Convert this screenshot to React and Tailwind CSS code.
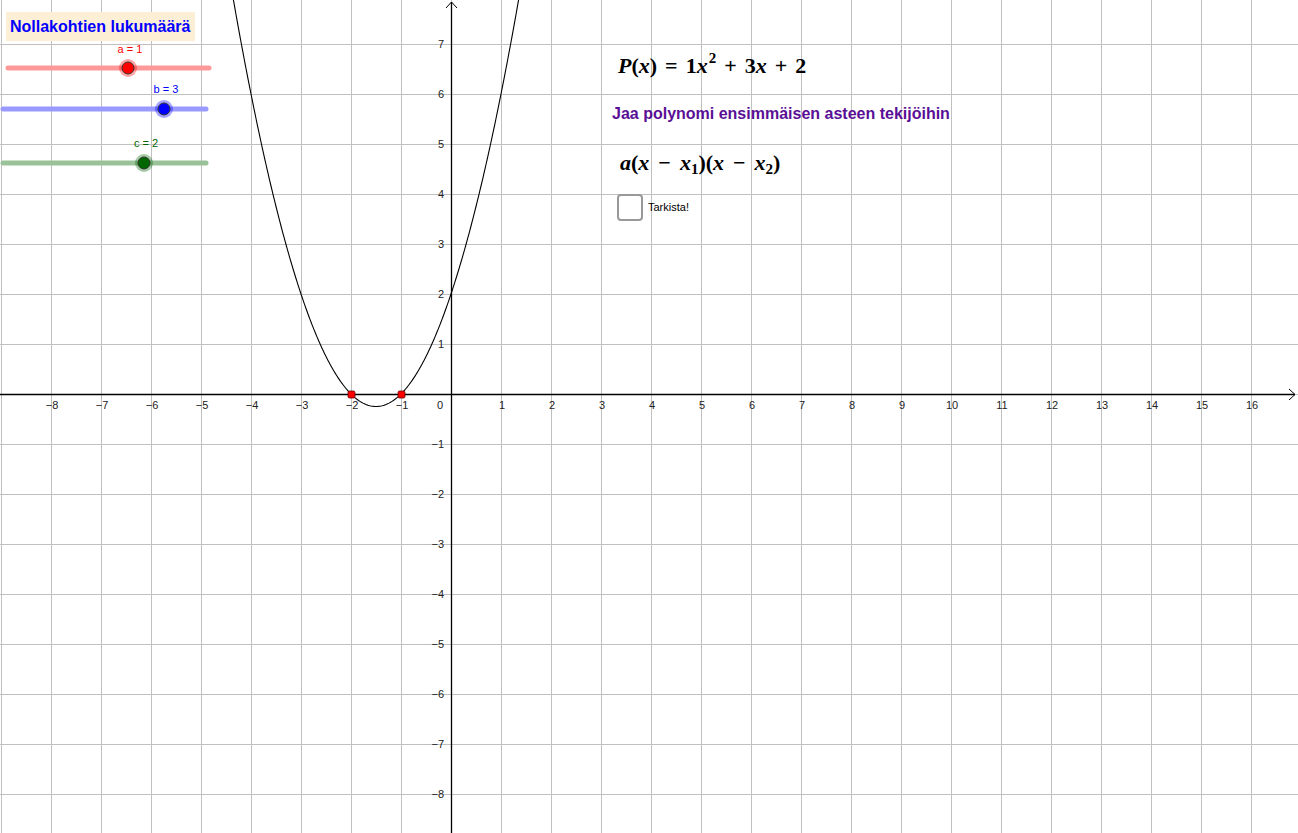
import React from "react";

const OX = 451;
const OY = 394;
const U = 50;

const px = (x) => OX + x * U;
const py = (y) => OY - y * U;

function Graph() {
  const vLines = [];
  for (let i = -9; i <= 17; i++) vLines.push(i);
  const hLines = [];
  for (let j = -9; j <= 8; j++) hLines.push(j);

  // paraabeli y = x^2 + 3x + 2
  const pts = [];
  for (let x = -4.5; x <= 1.5; x += 0.02) {
    const y = x * x + 3 * x + 2;
    pts.push(`${px(x).toFixed(2)},${py(y).toFixed(2)}`);
  }

  const minus = (n) => (n < 0 ? `\u2212${-n}` : `${n}`);

  return (
    <svg width="1298" height="833" className="absolute inset-0" style={{ fontFamily: "'Liberation Sans', Arial, sans-serif" }}>
      <rect width="1298" height="833" fill="#ffffff" />
      {vLines.map((i) => (
        <line key={`v${i}`} x1={px(i) + 0.5} y1="0" x2={px(i) + 0.5} y2="833" stroke="#c0c0c0" strokeWidth="1" />
      ))}
      {hLines.map((j) => (
        <line key={`h${j}`} x1="0" y1={py(j) + 0.5} x2="1298" y2={py(j) + 0.5} stroke="#c0c0c0" strokeWidth="1" />
      ))}

      {/* akselit */}
      <line x1="0" y1={OY + 0.5} x2="1295" y2={OY + 0.5} stroke="#000" strokeWidth="1.3" />
      <polyline points={`1289,${OY - 5} 1295,${OY + 0.5} 1289,${OY + 6}`} fill="none" stroke="#000" strokeWidth="1" />
      <line x1={OX + 0.5} y1="2" x2={OX + 0.5} y2="833" stroke="#000" strokeWidth="1.3" />
      <polyline points={`${OX - 5},8 ${OX + 0.5},2 ${OX + 6},8`} fill="none" stroke="#000" strokeWidth="1" />

      {/* x-akselin luvut */}
      {vLines
        .filter((i) => i >= -8 && i <= 16 && i !== 0)
        .map((i) => (
          <text key={`xl${i}`} x={px(i) + 1} y={OY + 15} fontSize="11" fill="#222" textAnchor="middle">
            {minus(i)}
          </text>
        ))}
      <text x={OX - 11} y={OY + 15} fontSize="11" fill="#222" textAnchor="middle">
        0
      </text>

      {/* y-akselin luvut */}
      {hLines
        .filter((j) => j >= -8 && j <= 7 && j !== 0)
        .map((j) => (
          <text key={`yl${j}`} x={OX - 7} y={py(j) + 4} fontSize="11" fill="#222" textAnchor="end">
            {minus(j)}
          </text>
        ))}

      <polyline points={pts.join(" ")} fill="none" stroke="#000" strokeWidth="1.1" />

      {/* nollakohdat */}
      {[-2, -1].map((x) => (
        <rect key={`z${x}`} x={px(x) - 3} y={OY - 3} width="7" height="7" rx="1.5" fill="#ff0000" stroke="#600" strokeWidth="0.8" />
      ))}

      {/* liukusäätimet */}
      <line x1="8" y1="68" x2="209" y2="68" stroke="#ff9999" strokeWidth="5" strokeLinecap="round" />
      <circle cx="128" cy="68" r="9" fill="#ff0000" fillOpacity="0.35" />
      <circle cx="128" cy="68" r="6" fill="#ff0000" stroke="#333" strokeWidth="1" />

      <line x1="3" y1="109" x2="206" y2="109" stroke="#9999ff" strokeWidth="5" strokeLinecap="round" />
      <circle cx="164" cy="109" r="9" fill="#0000ff" fillOpacity="0.35" />
      <circle cx="164" cy="109" r="6" fill="#0000ff" stroke="#333" strokeWidth="1" />

      <line x1="3" y1="163" x2="206" y2="163" stroke="#99c299" strokeWidth="5" strokeLinecap="round" />
      <circle cx="144" cy="163" r="9" fill="#006600" fillOpacity="0.35" />
      <circle cx="144" cy="163" r="6" fill="#006600" stroke="#333" strokeWidth="1" />

      <text x="130" y="53" fontSize="11" fill="#ff0000" textAnchor="middle">a = 1</text>
      <text x="166" y="93" fontSize="11" fill="#0000ff" textAnchor="middle">b = 3</text>
      <text x="146" y="147" fontSize="11" fill="#006600" textAnchor="middle">c = 2</text>
    </svg>
  );
}

const mathCls = "font-['Liberation_Serif',serif] font-bold text-[22px] leading-[22px] h-[22px] text-black whitespace-nowrap flex items-baseline";

function Op({ children, m = "mx-[8px]" }) {
  return <span className={m}>{children}</span>;
}

export default function App() {
  return (
    <div className="relative w-[1298px] h-[833px] overflow-hidden bg-white font-['Liberation_Sans',Arial,sans-serif]">
      <Graph />

      <div className="absolute left-[6px] top-[12px] h-[29px] px-[4px] flex items-center bg-[#fdeed6]">
        <span className="text-[16px] font-bold text-[#0000ff] leading-none">Nollakohtien lukumäärä</span>
      </div>

      <div className="absolute left-[612px] top-[55px] flex flex-col items-start">
        <div className={`ml-[6px] ${mathCls}`}>
          <i>P</i>(<i>x</i>)<Op>=</Op>1<i>x</i>
          <span className="text-[15px] relative -top-[10px] ml-[1px]">2</span>
          <Op>+</Op>3<i>x</i>
          <Op>+</Op>2
        </div>

        <div className="mt-[29px] text-[16px] font-bold text-[#5a0f96] leading-[16px] whitespace-nowrap">
          Jaa polynomi ensimmäisen asteen tekijöihin
        </div>

        <div className={`ml-[8px] mt-[30px] ${mathCls}`}>
          <i>a</i>(<i>x</i>
          <Op m="mx-[9px]">−</Op>
          <i>x</i>
          <span className="text-[15px] relative top-[4px]">1</span>)(<i>x</i>
          <Op m="mx-[9px]">−</Op>
          <i>x</i>
          <span className="text-[15px] relative top-[4px]">2</span>)
        </div>

        <div className="ml-[5px] mt-[20px] flex items-center gap-[5px]">
          <div className="w-[26px] h-[27px] rounded-[4px] border-2 border-[#999] bg-white" />
          <span className="text-[11px] text-black">Tarkista!</span>
        </div>
      </div>
    </div>
  );
}
